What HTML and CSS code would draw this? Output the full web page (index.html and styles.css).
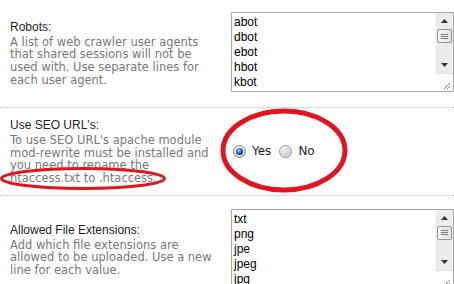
FILE: index.html
```html
<!DOCTYPE html>
<html>
<head>
<meta charset="utf-8">
<link rel="stylesheet" href="styles.css">
</head>
<body>
<div class="page">
  <div class="row row-first">
    <div class="label">
      <div class="title">Robots:</div>
      <div class="desc">A list of web crawler user agents that shared sessions will not be used with. Use separate lines for each user agent.</div>
    </div>
    <div class="field">
      <div class="textbox">
        <div class="lines">abot<br>dbot<br>ebot<br>hbot<br>kbot</div>
        <div class="scrollbar">
          <div class="sb-btn"><svg width="7" height="4" viewBox="0 0 7 4"><path d="M0 4 L3.5 0 L7 4 Z" fill="#333"/></svg></div>
          <div class="sb-thumb"><span></span><span></span><span></span></div>
          <div class="sb-track"></div>
          <div class="sb-btn"><svg width="7" height="4" viewBox="0 0 7 4"><path d="M0 0 L3.5 4 L7 0 Z" fill="#333"/></svg></div>
          <div class="sb-resizer"><svg width="17" height="17" viewBox="0 0 17 17"><path d="M15 9 L9 15 M15 12 L12 15" stroke="#8a8a8a" stroke-width="1"/></svg></div>
        </div>
      </div>
    </div>
  </div>

  <div class="row">
    <div class="label">
      <div class="title">Use SEO URL's:</div>
      <div class="desc">To use SEO URL's apache module mod-rewrite must be installed and you need to rename the htaccess.txt to .htaccess.</div>
    </div>
    <div class="field">
      <div class="radios">
        <span class="radio"><svg width="13" height="13" viewBox="0 0 13 13">
          <defs>
            <radialGradient id="rbg" cx="40%" cy="35%" r="65%"><stop offset="0" stop-color="#ffffff"/><stop offset="1" stop-color="#cfcfcf"/></radialGradient>
            <radialGradient id="rdot" cx="40%" cy="35%" r="70%"><stop offset="0" stop-color="#9ad8f8"/><stop offset="0.45" stop-color="#2c7cb8"/><stop offset="1" stop-color="#0c3452"/></radialGradient>
          </defs>
          <circle cx="6.5" cy="6.5" r="6" fill="url(#rbg)" stroke="#868686"/>
          <circle cx="6.5" cy="6.5" r="3.6" fill="url(#rdot)"/>
        </svg></span>
        <span class="opt">Yes</span>
        <span class="radio"><svg width="13" height="13" viewBox="0 0 13 13">
          <defs>
            <radialGradient id="rbg2" cx="40%" cy="35%" r="65%"><stop offset="0" stop-color="#ffffff"/><stop offset="1" stop-color="#d2d2d2"/></radialGradient>
            <radialGradient id="rin2" cx="40%" cy="35%" r="70%"><stop offset="0" stop-color="#f4f4f4"/><stop offset="1" stop-color="#c6c6c6"/></radialGradient>
          </defs>
          <circle cx="6.5" cy="6.5" r="6" fill="url(#rbg2)" stroke="#9a9a9a"/>
          <circle cx="6.5" cy="6.5" r="3.8" fill="url(#rin2)"/>
        </svg></span>
        <span class="opt">No</span>
      </div>
    </div>
  </div>

  <div class="row">
    <div class="label">
      <div class="title">Allowed File Extensions:</div>
      <div class="desc">Add which file extensions are allowed to be uploaded. Use a new line for each value.</div>
    </div>
    <div class="field">
      <div class="textbox">
        <div class="lines">txt<br>png<br>jpe<br>jpeg<br>jpg</div>
        <div class="scrollbar">
          <div class="sb-btn"><svg width="7" height="4" viewBox="0 0 7 4"><path d="M0 4 L3.5 0 L7 4 Z" fill="#333"/></svg></div>
          <div class="sb-thumb"><span></span><span></span><span></span></div>
          <div class="sb-track"></div>
          <div class="sb-btn"><svg width="7" height="4" viewBox="0 0 7 4"><path d="M0 0 L3.5 4 L7 0 Z" fill="#333"/></svg></div>
          <div class="sb-resizer"><svg width="17" height="17" viewBox="0 0 17 17"><path d="M15 9 L9 15 M15 12 L12 15" stroke="#8a8a8a" stroke-width="1"/></svg></div>
        </div>
      </div>
    </div>
  </div>

  <svg class="marks" width="454" height="284" viewBox="0 0 454 284">
    <ellipse cx="284" cy="150.5" rx="61" ry="39.5" fill="none" stroke="#e1141f" stroke-width="5"/>
    <ellipse cx="83" cy="178.5" rx="81.5" ry="10" fill="none" stroke="#e1141f" stroke-width="3"/>
  </svg>
</div>
</body>
</html>
```

FILE: styles.css
```css
html, body {
  margin: 0;
  padding: 0;
  background: #ffffff;
}

body {
  width: 454px;
  height: 284px;
  overflow: hidden;
}

.page {
  position: relative;
  width: 454px;
}

.row {
  display: grid;
  grid-template-columns: 231px 223px;
  align-items: center;
  padding: 10px 0;
  border-bottom: 1px dotted #c2c2c2;
}

.row-first {
  padding-top: 9px;
}

.label {
  padding: 0 18px 0 10px;
}

.title {
  font-family: "Liberation Sans", Arial, sans-serif;
  font-size: 12px;
  line-height: 15px;
  color: #1e1e1e;
  margin-bottom: 1px;
}

.desc {
  font-family: "DejaVu Sans", Verdana, sans-serif;
  font-size: 11.5px;
  line-height: 12.7px;
  color: #787878;
}

.textbox {
  box-sizing: border-box;
  height: 80px;
  margin: 3px 0 5px;
  border: 1px solid #a8a8a8;
  display: flex;
  align-items: flex-start;
  background: #ffffff;
}

.lines {
  flex: 1;
  height: 75px;
  margin-top: 2px;
  padding: 0 2px;
  font-family: "Liberation Sans", Arial, sans-serif;
  font-size: 12px;
  line-height: 15px;
  color: #000000;
  overflow: hidden;
}

.scrollbar {
  align-self: stretch;
  width: 17px;
  display: flex;
  flex-direction: column;
  background: #ececec;
  border-left: 1px solid #f4f4f4;
}

.sb-btn {
  height: 16px;
  display: flex;
  align-items: center;
  justify-content: center;
}

.sb-thumb {
  box-sizing: border-box;
  height: 14px;
  margin: 0 1px;
  border: 1px solid #959595;
  border-radius: 2px;
  background: linear-gradient(to right, #f6f6f6, #e2e2e2);
  display: flex;
  flex-direction: column;
  justify-content: center;
  align-items: center;
  gap: 1px;
}

.sb-thumb span {
  display: block;
  width: 7px;
  height: 1px;
  background: #7d7d7d;
}

.sb-track {
  flex: 1;
}

.sb-resizer {
  height: 17px;
  background: #ffffff;
  border-top: 1px solid #e2e2e2;
  margin-left: -1px;
}

.sb-resizer svg {
  display: block;
}

.radios {
  display: flex;
  align-items: center;
  padding-left: 2px;
  font-family: "DejaVu Sans", Verdana, sans-serif;
  font-size: 12px;
  color: #1e1e1e;
}

.radio {
  display: flex;
  width: 13px;
  height: 13px;
}

.opt {
  margin: 0 8px 0 6px;
}

.marks {
  position: absolute;
  left: 0;
  top: 0;
  pointer-events: none;
}
```
